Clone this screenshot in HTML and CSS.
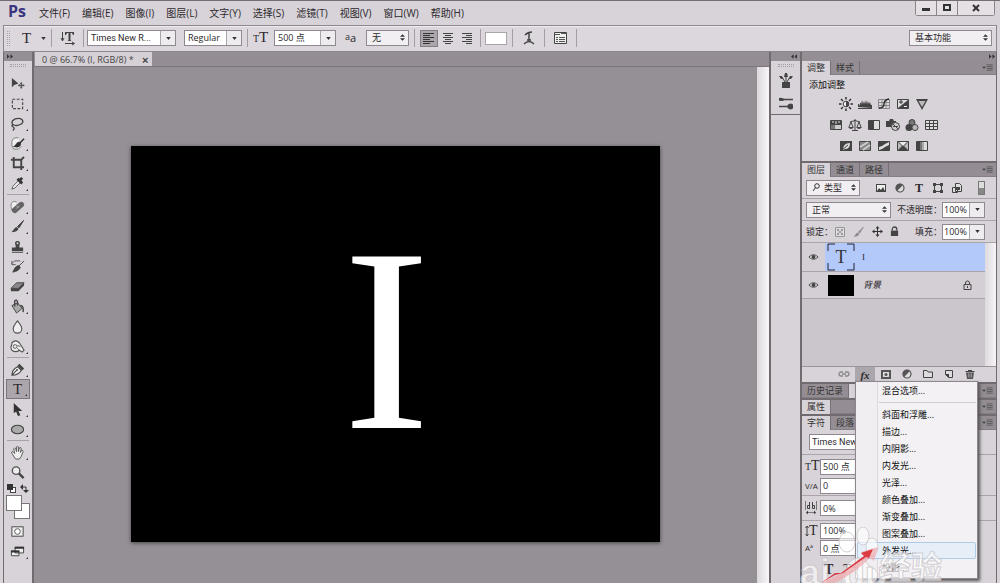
FILE: index.html
```html
<!DOCTYPE html>
<html lang="zh-CN">
<head>
<meta charset="utf-8">
<title>Photoshop</title>
<link rel="stylesheet" href="styles.css">
</head>
<body>
<svg class="defs" aria-hidden="true">
  <symbol id="caret" viewBox="0 0 6 4"><path d="M0 0h6L3 4z" fill="#333"/></symbol>
  <symbol id="updown" viewBox="0 0 6 8"><path d="M0 3l3-3 3 3zM0 5h6L3 8z" fill="#333"/></symbol>
  <symbol id="ff" viewBox="0 0 7 5"><path d="M0 0l3 2.500L0 5zM4 0l3 2.500L4 5z" fill="#333"/></symbol>
  <symbol id="rw" viewBox="0 0 7 5"><path d="M3 0L0 2.500 3 5zM7 0L4 2.500 7 5z" fill="#333"/></symbol>
  <symbol id="flyout" viewBox="0 0 12 8"><path d="M0 3h4L2 5.500z" fill="#333"/><path d="M5 1h7M5 3h7M5 5h7M5 7h7" stroke="#555"/></symbol>
  <symbol id="eye" viewBox="0 0 12 8"><path d="M1 4Q6-1 11 4Q6 9 1 4z" fill="#eee" stroke="#444"/><circle cx="6" cy="4" r="2.200" fill="#444"/></symbol>
  <symbol id="lock" viewBox="0 0 10 12"><path d="M2.500 5V3.500a2.500 2.500 0 0 1 5 0V5" fill="none" stroke="#444" stroke-width="1.400"/><rect x="1" y="5" width="8" height="6" fill="#444"/></symbol>
  <symbol id="brush" viewBox="0 0 16 16"><path d="M14.500 1.500L8 8l1.500 1.500z" fill="#444" stroke="#444"/><path d="M7 8.500l2 2c-1 3-4 3.500-8 3.500 3-1 3-4.500 6-5.500z" fill="#444"/></symbol>
  <symbol id="half" viewBox="0 0 12 12"><circle cx="6" cy="6" r="4" fill="#ddd" stroke="#555" stroke-width="1.200"/><path d="M3 9A4.200 4.200 0 0 1 9 3z" fill="#555"/></symbol>
</svg>

<div class="window">
  <header class="titlebar">
    <span class="logo">Ps</span>
    <nav class="menubar">
      <button>文件(F)</button><button>编辑(E)</button><button>图像(I)</button><button>图层(L)</button><button>文字(Y)</button><button>选择(S)</button><button>滤镜(T)</button><button>视图(V)</button><button>窗口(W)</button><button>帮助(H)</button>
    </nav>
    <div class="winbtns">
      <button aria-label="最小化"><svg width="10" height="8"><path d="M1 5.500h8" stroke="#333" stroke-width="3"/></svg></button>
      <button aria-label="最大化"><svg width="10" height="8"><rect x="2" y="1" width="6" height="5" fill="none" stroke="#333" stroke-width="2"/></svg></button>
      <button class="close" aria-label="关闭"><svg width="10" height="8"><path d="M2 1l6 6M8 1L2 7" stroke="#333" stroke-width="2"/></svg></button>
    </div>
  </header>

  <div class="options">
    <span class="handle"></span>
    <span class="type-tool serif">T</span>
    <svg class="type-caret" width="5" height="3"><use href="#caret"/></svg>
    <i class="vsep"></i>
    <button class="ob orient" aria-label="切换文本取向"><svg width="16" height="16" viewBox="0 0 16 16"><path d="M2.500 2v8M1 8l1.500 3L4 8M5 13.500h9M12 12l2.500 1.500L12 15" fill="none" stroke="#444"/><path d="M5 2h9v3h-1L12 3h-1.500v7l1 1h-4l1-1V3H7L6 5H5z" fill="#444"/></svg></button>
    <i class="vsep"></i>
    <div class="combo family"><input aria-label="字体" value="Times New R..."><button aria-label="选择字体"><svg width="5" height="3"><use href="#caret"/></svg></button></div>
    <div class="combo style"><input aria-label="字体样式" value="Regular"><button aria-label="选择样式"><svg width="5" height="3"><use href="#caret"/></svg></button></div>
    <i class="vsep"></i>
    <span class="tt serif"><small>T</small>T</span>
    <div class="combo size"><input aria-label="字体大小" value="500 点"><button aria-label="选择大小"><svg width="5" height="3"><use href="#caret"/></svg></button></div>
    <span class="aa"><small>a</small>a</span>
    <div class="pick alias"><select aria-label="消除锯齿"><option>无</option></select><svg width="5" height="7"><use href="#updown"/></svg></div>
    <i class="vsep"></i>
    <button class="ob al on" aria-label="左对齐"><svg width="12" height="12"><path d="M0 1.500h11M0 3.500h7M0 5.500h11M0 7.500h7M0 9.500h11M0 11.500h7" stroke="#333"/></svg></button>
    <button class="ob al" aria-label="居中"><svg width="12" height="12"><path d="M1 1.500h10M3 3.500h6M1 5.500h10M3 7.500h6M1 9.500h10M3 11.500h6" stroke="#444"/></svg></button>
    <button class="ob al" aria-label="右对齐"><svg width="12" height="12"><path d="M1 1.500h10M5 3.500h6M1 5.500h10M5 7.500h6M1 9.500h10M5 11.500h6" stroke="#444"/></svg></button>
    <i class="vsep"></i>
    <button class="swatch" aria-label="文本颜色"></button>
    <i class="vsep"></i>
    <button class="ob warp" aria-label="变形文字"><svg width="12" height="14" viewBox="0 0 12 14"><path d="M2 4q3-3 7-3M6 2v7M4 9h4M1 13q5-5 10 0" fill="none" stroke="#444" stroke-width="1.500"/></svg></button>
    <i class="vsep"></i>
    <button class="ob warp" aria-label="字符面板"><svg width="14" height="13"><path d="M.5.500h12v11H.5z" fill="#eee" stroke="#444"/><path d="M1 2.500h5M7 1.500h5" stroke="#555"/><path d="M2 5.500h2M5 5.500h6M2 7.500h2M5 7.500h6M2 9.500h2M5 9.500h6" stroke="#555"/></svg></button>
    <i class="vsep"></i>
    <div class="pick workspace"><select aria-label="工作区"><option>基本功能</option></select><svg width="5" height="7"><use href="#updown"/></svg></div>
  </div>

  <main class="main">
    <aside class="tools">
      <div class="strip"><svg width="6" height="5"><use href="#ff"/></svg></div>
      <span class="dots"></span>
      <button class="nosub" aria-label="移动"><svg viewBox="0 0 16 16"><path d="M2 2v10l2.500-2.500L9 8z" fill="#444"/><path d="M12 6.500v7M8.500 10h7M11 8h2M11 12h2M10 9v2M14 9v2" stroke="#444"/></svg></button>
      <button aria-label="选框"><svg viewBox="0 0 16 16"><rect x="2.500" y="3.500" width="11" height="10" fill="none" stroke="#444" stroke-width="1.200" stroke-dasharray="3 1.700"/></svg></button>
      <button aria-label="套索"><svg viewBox="0 0 16 16"><path d="M3.500 10C0 6 4 2.500 9 2.500s6 4 3 6-7 2-8 1-3 1-1 2 2 2 0 4" fill="none" stroke="#444" stroke-width="1.400"/></svg></button>
      <button aria-label="快速选择"><svg viewBox="0 0 16 16"><path d="M9 2Q3 1 2 6t2 8h5l3-3" fill="#eee" stroke="#777"/><path d="M15 3l-5 5M10 7c-3 0-3 3-5 4 3 1 6 0 6-3z" fill="#333" stroke="#333" stroke-width="1.600"/></svg></button>
      <button aria-label="裁剪"><svg viewBox="0 0 16 16"><path d="M1 4h11v11M4 1v11h11M12 4l3-3" fill="none" stroke="#444" stroke-width="2"/></svg></button>
      <button aria-label="吸管"><svg viewBox="0 0 16 16"><path d="M2 14l1-3 6-6 2 2-6 6z" fill="#eee" stroke="#555"/><path d="M8 3l5 5M10 5l3-3" stroke="#333" stroke-width="3"/></svg></button>
      <hr>
      <button aria-label="修复画笔"><svg viewBox="0 0 16 16"><path d="M7 3Q1 1 1 8q0 5 4 6" fill="#eee" stroke="#888"/><path d="M5 12l7-6" stroke="#666" stroke-width="6" stroke-linecap="round"/><path d="M7 10l3-3M7 7.500l2.500 2.500" stroke="#ddd" stroke-dasharray="1"/></svg></button>
      <button aria-label="画笔"><svg viewBox="0 0 16 16"><use href="#brush"/></svg></button>
      <button aria-label="仿制图章"><svg viewBox="0 0 16 16"><path d="M6 7Q4 2 8 2t2 5v2h4v4H2V9h4zM2 14h12v1H2z" fill="#444"/><circle cx="8" cy="4.500" r="1" fill="#ddd"/></svg></button>
      <button aria-label="历史画笔"><svg viewBox="0 0 16 16"><path d="M15 2L9 8M9 7l2 2c-2 4-5 4-8 5 2-3 2-6 6-7z" fill="#444" stroke="#444"/><path d="M11 2H5L2 5M2 2v4h4" fill="none" stroke="#555"/></svg></button>
      <button aria-label="橡皮擦"><svg viewBox="0 0 16 16"><path d="M1 10l6-6h8l-6 6z" fill="#888" stroke="#444"/><path d="M1 10v3h8l6-6V4l-6 6z" fill="#444"/></svg></button>
      <button aria-label="油漆桶"><svg viewBox="0 0 16 16"><path d="M2 7l6-3 5 6-6 5z" fill="#aaa" stroke="#444"/><path d="M5 8V2q2-2 3 1v4M11 7q4 0 3 7" fill="none" stroke="#444" stroke-width="1.500"/></svg></button>
      <button aria-label="模糊"><svg viewBox="0 0 16 16"><path d="M8 2Q3 8 3.500 11a4.500 4 0 0 0 9 0Q13 8 8 2z" fill="#eee" stroke="#555" stroke-width="1.200"/></svg></button>
      <button aria-label="减淡"><svg viewBox="0 0 16 16"><path d="M2 4Q6 0 10 4l5 8-2 2-3-2Q6 15 2 12 0 9 2 6z" fill="#eee" stroke="#555" stroke-width="1.200"/><circle cx="5.500" cy="8" r="2" fill="none" stroke="#555"/><path d="M8 7l3 1M10 12l-2-2" stroke="#555"/></svg></button>
      <hr>
      <button aria-label="钢笔"><svg viewBox="0 0 16 16"><path d="M2 14q0-6 6-9l4 4q-3 5-10 5zl5-5" fill="#eee" stroke="#444" stroke-width="1.200"/><path d="M9 3l5 5" stroke="#444" stroke-width="3"/><circle cx="7.500" cy="8.500" r="1" fill="#444"/></svg></button>
      <button class="active serif" aria-label="横排文字">T</button>
      <button aria-label="路径选择"><svg viewBox="0 0 16 16"><path d="M4 1v11l2.500-2 2 5 2.500-1-2-4.500h4z" fill="#333"/></svg></button>
      <button aria-label="椭圆"><svg viewBox="0 0 16 16"><ellipse cx="8" cy="8" rx="6.500" ry="4.500" fill="#aaa" stroke="#444" stroke-width="1.200"/></svg></button>
      <hr>
      <button aria-label="抓手"><svg viewBox="0 0 16 16"><path d="M6 15L2 9q-1-2 1-2l2 2-1-5q1-2 2 0l1 3V2q1-1 2 0v5l1-4q2-1 2 1l-1 4 1-2q2-1 2 1l-2 5-2 3z" fill="#eee" stroke="#555"/></svg></button>
      <button class="nosub" aria-label="缩放"><svg viewBox="0 0 16 16"><circle cx="6.500" cy="6" r="4" fill="#eee" stroke="#555" stroke-width="1.500"/><path d="M9.500 9l5 5" stroke="#444" stroke-width="2.500"/></svg></button>
      <div class="mini">
        <svg width="9" height="9"><rect x="3.500" y="3.500" width="5" height="5" fill="#fff" stroke="#444"/><rect width="6" height="6" fill="#333"/></svg>
        <svg width="9" height="9"><path d="M2 3h4v4" fill="none" stroke="#333"/><path d="M3 0L0 3l3 3zM3 6h6L6 9z" fill="#333"/></svg>
      </div>
      <div class="colors"><button class="fg" aria-label="前景色"></button><button class="bg" aria-label="背景色"></button></div>
      <button class="nosub" aria-label="快速蒙版"><svg viewBox="0 0 16 16"><rect x="2" y="3" width="12" height="10" fill="#eee" stroke="#444"/><circle cx="8" cy="8" r="3" fill="#fff" stroke="#555"/></svg></button>
      <button aria-label="屏幕模式"><svg viewBox="0 0 16 16"><path d="M5.500 3.500h9v6h-9zM1.500 7.500h8v5h-8z" fill="#eee" stroke="#444"/><path d="M5 4h10M1 8h9" stroke="#333" stroke-width="2"/></svg></button>
    </aside>

    <section class="doc">
      <div class="doctabs"><div class="doctab">0 @ 66.7% (I, RGB/8) * <button aria-label="关闭文档">×</button></div></div>
      <div class="stage">
        <div class="board"><div class="canvas serif">I</div></div>
        <div class="scroll"></div>
      </div>
    </section>

    <div class="dock">
      <div class="strip"><svg width="6" height="5"><use href="#rw"/></svg></div>
      <div class="dockbox">
        <span class="dots"></span>
        <button aria-label="画笔预设"><svg width="14" height="16" viewBox="0 0 14 16"><path d="M3 9h8v6H3z" fill="#444"/><path d="M6 9L3 4M7 9V3M8 9l3-5" stroke="#444"/><path d="M0 3h3l1 3-2 0zM6 0h2l1 4H5zM11 3h3l-2 3h-2z" fill="#444"/></svg></button>
        <button aria-label="画笔"><svg width="16" height="16" viewBox="0 0 16 16"><path d="M5 4.500h10M1 11.500h10" stroke="#444" stroke-width="1.500"/><path d="M1 3q3-1 6 1.500Q4 7 1 5.500zM9 11.500q1-3 4-3l2 1v4l-2 1q-3 0-4-3z" fill="#444"/></svg></button>
      </div>
    </div>

    <aside class="panels">
      <div class="strip right"><svg width="6" height="5"><use href="#ff"/></svg></div>
      <section class="panel adjust">
        <div class="tabs"><button class="sel">调整</button><button>样式</button><svg width="11" height="7"><use href="#flyout"/></svg></div>
        <h2>添加调整</h2>
        <div class="grid">
          <div>
            <svg viewBox="0 0 14 14"><circle cx="7" cy="7" r="2.800" fill="#eee" stroke="#444"/><path d="M7 4a3 3 0 0 1 0 6z" fill="#444"/><path d="M7 0v2.500M7 11.500V14M0 7h2.500M11.500 7H14M2 2l2 2M10 10l2 2M12 2l-2 2M4 10l-2 2" stroke="#333" stroke-width="1.500"/></svg>
            <svg viewBox="0 0 14 14"><path d="M0 10V7h1l1 2V6h1v2l1-5 1 4 1-3 1 3 1-4 1 4 1-3 1 3 1-2 1 3h1v3zM0 11h14v1H0z" fill="#444"/></svg>
            <svg viewBox="0 0 14 14"><path d="M1.500 2.500h11v9h-11zM5 2v10M9 2v10M1 5.500h12M1 8.500h12" fill="#ddd" stroke="#888"/><path d="M2 11q5 0 5-4t5-5" fill="none" stroke="#222" stroke-width="1.300"/></svg>
            <svg viewBox="0 0 14 14"><path d="M1.500 2.500h11v9h-11z" fill="#ddd" stroke="#444"/><path d="M12 3v8H2z" fill="#444"/><path d="M3 5h4M5 3v4" stroke="#333"/><path d="M8 9.500h3" stroke="#eee"/></svg>
            <svg viewBox="0 0 14 14"><path d="M1 2h12L7 13z" fill="#444"/><path d="M3.500 4h7L7 10z" fill="#bbb"/></svg>
          </div>
          <div>
            <svg viewBox="0 0 14 14"><path d="M1.500 2.500h11v9h-11z" fill="#ccc" stroke="#444"/><path d="M2 3h10v4H2z" fill="#444"/><path d="M4 3v2M7 3v3M10 3v2" stroke="#ddd"/><path d="M2 7h4v4H2z" fill="#777"/></svg>
            <svg viewBox="0 0 14 14"><path d="M7 1v11M4 12.500h6M2 4q5-3 10 0M3 4L1 9M3 4l2 5M11 4L9 9M11 4l2 5" fill="none" stroke="#444"/><path d="M0 9h6q-3 4-6 0zM8 9h6q-3 4-6 0z" fill="#444"/></svg>
            <svg viewBox="0 0 14 14"><path d="M1.500 2.500h11v9h-11z" fill="#ddd" stroke="#444"/><path d="M2 3h5v8H2z" fill="#444"/></svg>
            <svg viewBox="0 0 14 14"><path d="M0 3h3l1-2h3l1 2h2v6H0z" fill="#444"/><circle cx="9.500" cy="8.500" r="4" fill="#ccc" stroke="#444"/><path d="M7 6l5 5M7 8.500h5" stroke="#444"/></svg>
            <svg viewBox="0 0 14 14"><circle cx="7" cy="4.500" r="3" fill="#777" stroke="#444"/><circle cx="4" cy="9.500" r="3.500" fill="#444"/><circle cx="10" cy="9.500" r="3" fill="#bbb" stroke="#444"/></svg>
            <svg viewBox="0 0 14 14"><path d="M1.500 2.500h12v9h-12zM5.500 2v10M9.500 2v10M1 5.500h13M1 8.500h13" fill="#ddd" stroke="#444"/></svg>
          </div>
          <div>
            <svg viewBox="0 0 14 14"><path d="M1 2h12v10H1z" fill="#444"/><path d="M4 11q0-7 7-7 0 6-5 6z" fill="#ddd"/><path d="M3 11l6-5" stroke="#444"/></svg>
            <svg viewBox="0 0 14 14"><path d="M1.500 2.500h11v9h-11z" fill="#888" stroke="#444"/><path d="M2 8l8-5M5 11l7-5" stroke="#ccc" stroke-width="2"/></svg>
            <svg viewBox="0 0 14 14"><path d="M1.500 2.500h11v9h-11z" fill="#444" stroke="#444"/><path d="M2 8l3-1 3-2 4-2v3L8 8l-3 2-3 1z" fill="#ddd"/></svg>
            <svg viewBox="0 0 14 14"><path d="M1.500 2.500h11v9h-11z" fill="#444" stroke="#444"/><path d="M2 3l4 4-4 4zM12 3L8 7l4 4z" fill="#bbb"/><path d="M3 3h8L7 7z" fill="#eee"/></svg>
            <svg viewBox="0 0 14 14"><path d="M1.500 2.500h11v9h-11z" fill="#ddd" stroke="#444"/><path d="M2 3h3v8H2z" fill="#444"/><path d="M5 3h2v8H5z" fill="#777"/><path d="M7 3h2v8H7z" fill="#aaa"/></svg>
          </div>
        </div>
      </section>

      <section class="panel layers">
        <div class="tabs"><button class="sel">图层</button><button>通道</button><button>路径</button><svg width="11" height="7"><use href="#flyout"/></svg></div>
        <div class="row">
          <div class="pick kind"><svg class="mag" width="8" height="9"><circle cx="5" cy="3" r="2.300" fill="none" stroke="#333"/><path d="M3.500 4.500L1 8" stroke="#333"/></svg><select aria-label="类型"><option>类型</option></select><svg width="5" height="7"><use href="#updown"/></svg></div>
          <div class="filters">
            <svg width="12" height="12"><rect x="1.500" y="2.500" width="9" height="7" fill="#eee" stroke="#444"/><path d="M2 9l2-3 2 2 2-3 2 4z" fill="#444"/></svg>
            <svg width="12" height="12"><use href="#half"/></svg>
            <b class="serif">T</b>
            <svg width="12" height="12"><path d="M2.500 3v6M9.500 3v6M3 2.500h6M3 9.500h6" stroke="#444"/><path d="M1 1h3v3H1zM8 1h3v3H8zM1 8h3v3H1zM8 8h3v3H8z" fill="#444"/></svg>
            <svg width="12" height="12"><path d="M4.500 1.500h4l2 2v6h-6zM1.500 5.500h5v5h-5z" fill="#ddd" stroke="#444"/><path d="M5 5h4v3H5z" fill="#444"/></svg>
          </div>
          <svg class="toggle" width="7" height="14"><rect x=".5" y=".5" width="6" height="13" fill="#ddd" stroke="#777"/><path d="M1 7h5v6H1z" fill="#888"/></svg>
        </div>
        <div class="row">
          <div class="pick blend"><select aria-label="混合模式"><option>正常</option></select><svg width="5" height="7"><use href="#updown"/></svg></div>
          <label class="right" for="op">不透明度：</label><div class="combo pct"><input id="op" value="100%"><button aria-label="不透明度滑块"><svg width="5" height="3"><use href="#caret"/></svg></button></div>
        </div>
        <div class="row">
          <span class="lk">锁定：</span>
          <div class="locks">
            <svg width="10" height="10"><path d="M.5.5h9v9h-9z" fill="#ddd" stroke="#999"/><path d="M2 2h2v2H2zM6 2h2v2H6zM4 4h2v2H4zM2 6h2v2H2zM6 6h2v2H6z" fill="#999"/></svg>
            <svg width="13" height="12" opacity=".5"><use href="#brush"/></svg>
            <svg width="11" height="11"><path d="M5.500 1v9M1 5.500h9" stroke="#333"/><path d="M5.500 0l2 2.500h-4zM5.500 11l2-2.500h-4zM0 5.500l2.500-2v4zM11 5.500l-2.500-2v4z" fill="#333"/></svg>
            <svg width="9" height="11"><use href="#lock"/></svg>
          </div>
          <label class="right" for="fl">填充：</label><div class="combo pct"><input id="fl" value="100%"><button aria-label="填充滑块"><svg width="5" height="3"><use href="#caret"/></svg></button></div>
        </div>
        <div class="list">
          <ul>
            <li class="cur"><span class="eye"><svg width="11" height="8"><use href="#eye"/></svg></span><span class="thumb text serif"><svg viewBox="0 0 28 28"><path d="M1 8V1h7M20 1h7v7M27 20v7h-7M8 27H1v-7" fill="none" stroke="#223"/></svg>T</span><span class="lname serif">I</span></li>
            <li><span class="eye"><svg width="11" height="8"><use href="#eye"/></svg></span><span class="thumb"></span><em class="lname">背景</em><svg class="lk2" width="9" height="10" viewBox="0 0 9 10"><path d="M2.500 4V3a2 2 0 0 1 4 0v1M1 4.500h7v5H1zM4.500 6v2" fill="none" stroke="#444"/></svg></li>
          </ul>
          <div class="lscroll"></div>
        </div>
        <div class="foot">
          <button aria-label="链接"><svg width="12" height="12"><path d="M5 4H3a2 2 0 0 0 0 4h2M7 4h2a2 2 0 0 1 0 4H7M4 6h4" fill="none" stroke="#888" stroke-width="1.300"/></svg></button>
          <div class="fxwrap">
            <button class="fx serif" aria-label="图层样式">fx</button>
            <div class="menu">
              <button>混合选项...</button>
              <hr>
              <button>斜面和浮雕...</button><button>描边...</button><button>内阴影...</button><button>内发光...</button><button>光泽...</button><button>颜色叠加...</button><button>渐变叠加...</button><button>图案叠加...</button><button class="hot">外发光...</button><button>投影...</button>
            </div>
          </div>
          <button aria-label="蒙版"><svg width="12" height="12"><rect x="2" y="3" width="8" height="7" fill="#ddd" stroke="#555" stroke-width="2"/><circle cx="6" cy="6.500" r="1.500" fill="#555"/></svg></button>
          <button aria-label="调整图层"><svg width="12" height="12"><use href="#half"/></svg></button>
          <button aria-label="新建组"><svg width="12" height="12"><path d="M1.500 9.500v-7H5l1 1.500h4.500v5.500z" fill="#ddd" stroke="#444"/></svg></button>
          <button aria-label="新建图层"><svg width="12" height="12"><path d="M2.500 2.500h7v7h-4l-3-3z" fill="#ddd" stroke="#444"/><path d="M2 6h4v4z" fill="#444"/></svg></button>
          <button aria-label="删除"><svg width="12" height="12"><path d="M1.500 3.500h9M4 2.500h4" stroke="#444"/><path d="M2 4.500h8L9 11H3z" fill="#555"/><path d="M4.500 5.500v4M6 5.500v4M7.500 5.500v4" stroke="#bbb" stroke-width=".6"/></svg></button>
        </div>
      </section>

      <section class="panel"><div class="tabs"><button>历史记录</button><button class="sel blank" aria-label="动作"></button><svg width="11" height="7"><use href="#flyout"/></svg></div></section>
      <section class="panel"><div class="tabs"><button class="sel">属性</button><svg width="11" height="7"><use href="#flyout"/></svg></div></section>
      <section class="panel chars">
        <div class="tabs"><button class="sel">字符</button><button>段落</button><svg width="11" height="7"><use href="#flyout"/></svg></div>
        <div class="crow first"><input aria-label="字体系列" value="Times New"></div>
        <div class="crow"><label class="serif" for="c1"><small>T</small>T</label><input id="c1" value="500 点"></div>
        <div class="crow"><label class="va" for="c2">V/A</label><input id="c2" value="0"></div>
        <div class="crow tall"><label for="c3"><svg width="12" height="14" viewBox="0 0 12 14"><path d="M.5 0v9M11.500 0v9M1 11.500h10" stroke="#777"/><path d="M4.500 4.500h-2v3h2zM4.500 1v7M7.500 1v6.500h2v-3h-2" fill="none" stroke="#444"/><path d="M1 11.500l2-2v4zM11 11.500l-2-2v4z" fill="#444"/></svg></label><input id="c3" value="0%"></div>
        <div class="crow"><label class="serif vt" for="c4"><svg width="4" height="12" viewBox="0 0 4 12"><path d="M2 1v10M.5 3L2 1l1.500 2M.5 9L2 11l1.500-2" fill="none" stroke="#444"/></svg>T</label><input id="c4" value="100%"></div>
        <div class="crow low"><label class="va" for="c5">Aª</label><input id="c5" value="0 点"></div>
        <div class="crow faux serif"><b>T</b><i>T</i></div>
      </section>
    </aside>
  </main>

  <svg class="mark" width="150" height="56" viewBox="0 0 150 56" aria-hidden="true">
    <g fill="#fff" fill-opacity=".6" stroke="#c9c4c9" stroke-opacity=".8">
      <ellipse cx="48" cy="15" rx="8" ry="10"/><ellipse cx="64" cy="9" rx="6" ry="9"/><ellipse cx="73" cy="20" rx="6" ry="9"/><path d="M44 47Q45 38 55 32q8-3 12 2 2 6 9 8 5 5 1 11l-4 4H45q-3-5-1-10z"/>
      <text class="mlat" x="1" y="58">ai</text>
      <text class="mlat" x="44" y="60">du</text>
      <text class="mcn" x="81" y="51">经验</text>
    </g>
    <path d="M16 58Q46 48 66 28l-4-3 17-5-4 14-4-3Q49 52 26 60z" fill="#f0a8ac" fill-opacity=".7"/>
    <path d="M22 56L36 46l6 0 23-17-3-3 12-4-4 9-3-1-23 16-8 2z" fill="#dc3b43"/>
  </svg>
</div>
</body>
</html>
```
FILE: styles.css
```css
* { box-sizing: border-box; }
body { margin: 0; background: #d8d3d8; color: #2c292d; font: 10px/14px "Open Sans", "Noto Sans CJK SC", sans-serif; }
button, input, select { font: inherit; color: inherit; margin: 0; padding: 0; border: 0; background: none; border-radius: 0; }
button { display: flex; align-items: center; justify-content: center; }
input { min-width: 0; }
svg { flex: none; display: block; }
.defs { display: none; }
.serif { font-family: "Liberation Serif", serif; }

.window { position: relative; height: 100vh; overflow: hidden; display: flex; flex-direction: column; border-top: 1px solid #746e73; padding: 0 3px; }
.titlebar { display: flex; height: 24px; flex: none; }
.logo { width: 36px; padding-left: 5px; font: bold 16px/21px "Open Sans", sans-serif; color: #3a3580; }
.menubar { display: flex; gap: 12px; align-items: center; height: 24px; }
.menubar button { white-space: nowrap; }
.winbtns { margin-left: auto; margin-right: 2px; display: flex; height: 15px; border: 1px solid #8b858b; border-top: 0; border-radius: 0 0 3px 3px; }
.winbtns button { width: 21px; background: #e4e0e4; border-right: 1px solid #8b858b; }
.winbtns .close { width: 36px; border-right: 0; }

.options { display: flex; align-items: center; flex: none; height: 27px; border: 1px solid #8d878d; background: #dcd7dc; box-shadow: inset 0 1px #eeeaee; padding-bottom: 1px; }
.handle { width: 3px; height: 15px; margin: 0 12px 0 3px; border: dotted #aaa5aa; border-width: 0 1px; }
.type-tool { font-size: 15px; width: 15px; }
.type-caret { margin: 0 5px 0 4px; }
.vsep { flex: none; width: 1px; height: 18px; background: #a49ea4; }
.ob { height: 17px; flex: none; }
.orient { width: 31px; }
.combo { display: flex; height: 16px; border: 1px solid #8f898f; background: #fff; flex: none; }
.combo input { flex: 1; padding: 0 3px; background: #fff; font-size: 9px; }
.combo button { width: 15px; flex: none; border-left: 1px solid #aaa5aa; background: #efecef; }
.family { width: 89px; margin: 0 8px 0 3px; }
.combo.family input, .crow.first input { font-family: Roboto, sans-serif; }
.style { width: 58px; margin-right: 5px; }
.size { width: 62px; }
.tt { font-size: 15px; width: 26px; padding-left: 5px; }
.tt small, .crow small { font-size: 10px; }
.aa { width: 30px; padding-left: 9px; font-size: 11px; display: flex; align-items: center; }
.aa small { font-size: 9px; line-height: 9px; padding-bottom: 3px; }
.pick { position: relative; display: flex; align-items: center; height: 16px; border: 1px solid #8f898f; background: #f1eff1; flex: none; font-size: 9px; }
.pick select { appearance: none; width: 100%; height: 14px; padding-left: 5px; }
.pick svg:last-child { position: absolute; right: 3px; top: 3px; }
.alias { width: 43px; margin-right: 5px; }
.al { width: 19px; }
.al.on { width: 18px; margin-left: 5px; background: #aba6ab; border: 1px solid #847e84; }
.al + .vsep { margin-left: 4px; }
.swatch { width: 22px; height: 13px; background: #fff; border: 1px solid #aaa5aa; margin: 0 5px 0 4px; flex: none; }
.warp { width: 31px; }
.workspace { width: 83px; margin: 0 4px 0 auto; }

.main { flex: 1; display: flex; min-height: 0; background: #716b70; border: solid #716b70; border-width: 0 1px; }
.strip { height: 9px; flex: none; background: #958f95; display: flex; align-items: center; padding-left: 3px; }
.strip.right { justify-content: flex-end; padding-right: 1px; }
.dots { display: block; width: 16px; height: 3px; margin: 3px auto; border: dotted #a49ea4; border-width: 1px 0; }
.tools { width: 28px; flex: none; background: #d8d3d8; display: flex; flex-direction: column; margin-right: 2px; }
.tools > .dots { margin-bottom: 6px; flex: none; }
.tools > button { position: relative; height: 20px; width: 24px; margin: 0 2px; flex: none; padding-right: 1px; }
.tools > button svg { width: 15px; height: 15px; }
.tools > button:not(.nosub)::after { content: ""; position: absolute; right: 2px; bottom: 2px; border: 1px solid #333; border-top-color: transparent; border-left-color: transparent; }
.tools > .active { background: #aca6ac; border: 1px solid #7b757b; font-size: 15px; }
.tools hr { width: 22px; height: 1px; margin: 1px auto; border: 0; background: #a9a3a9; flex: none; }
.mini { display: flex; justify-content: space-between; padding: 2px 3px; }
.colors { display: grid; grid-template: 8px 8px 8px / 8px 8px 8px; margin: 0 2px 2px; }
.colors button { background: #fff; border: 1px solid #777; }
.colors .fg { grid-area: 1 / 1 / 3 / 3; z-index: 1; }
.colors .bg { grid-area: 2 / 2 / 4 / 4; }

.doc { flex: 1; min-width: 0; display: flex; flex-direction: column; }
.doctabs { height: 15px; background: #948e94; border-bottom: 1px solid #7b757b; display: flex; flex: none; }
.doctab { display: flex; align-items: center; gap: 6px; margin-left: 1px; padding: 2px 4px 0 7px; background: #d5d0d5; font-size: 9px; color: #444; white-space: pre; }
.doctab button { font: bold 11px/12px "Liberation Sans", sans-serif; }
.stage { flex: 1; display: flex; min-height: 0; background: #959096; }
.board { flex: 1; padding-top: 79px; }
.canvas { width: 529px; max-width: 100%; aspect-ratio: 529 / 396; margin: 0 auto; padding-right: 18px; background: #000; color: #fff; font-size: 262px; line-height: 388px; text-align: center; box-shadow: 0 1px 4px #444; }
.scroll { width: 12px; background: linear-gradient(90deg, #dcd8dc, #f8f6f8); }

.dock { width: 29px; margin: 0 0 0 2px; display: flex; flex-direction: column; background: #d8d3d8; flex: none; }
.dock .strip { justify-content: flex-end; padding-right: 3px; }
.dockbox { border-bottom: 1px solid #716b70; }
.dockbox button { width: 100%; height: 22px; }

.panels { width: 194px; margin-left: 2px; flex: none; display: flex; flex-direction: column; }
.panel { background: #d8d3d8; margin-bottom: 2px; flex: none; }
.tabs { display: flex; height: 14px; background: #948e94; font-size: 9px; line-height: 12px; border-bottom: 1px solid #857f85; color: #333; }
.tabs button { padding: 0 5px; border-right: 1px solid #777177; }
.tabs .sel { background: #d8d3d8; height: 14px; }
.tabs svg { margin: 3px 3px 0 auto; }
.blank { width: 60px; }
.adjust { height: 100px; }
.adjust h2 { margin: 3px 7px 1px; font: 9px/14px "Noto Sans CJK SC", sans-serif; color: #111; }
.grid { width: 109px; margin-left: 27px; display: grid; gap: 7px; padding-top: 4px; }
.grid div { display: flex; gap: 5px; justify-content: center; }
.grid svg { width: 14px; height: 14px; }
.row { display: flex; align-items: center; height: 22px; border-bottom: 1px solid #aaa4aa; padding: 0 11px 0 4px; font-size: 9px; white-space: nowrap; }
.row .right { margin-left: auto; }
.kind { width: 54px; }
.kind .mag { margin-left: 5px; flex: none; }
.kind select { padding-left: 4px; }
.filters { display: flex; gap: 7px; margin-left: 15px; align-items: center; }
.filters b { width: 12px; text-align: center; font-size: 12px; }
.toggle { margin-left: auto; }
.blend { width: 85px; }
.pct { width: 43px; }
.pct input { padding: 0 1px; }
.locks { display: flex; gap: 7px; align-items: center; margin-left: 2px; }
.list { display: flex; height: 123px; background: #cbc6cb; }
.list ul { flex: 1; margin: 0; padding: 0; list-style: none; }
.list li { display: flex; align-items: center; height: 27px; background: #d4cfd4; border-bottom: 1px solid #aaa4aa; }
.list .cur { height: 29px; background: #b3c9fa; }
.eye { width: 23px; height: 100%; display: flex; align-items: center; justify-content: center; background: #d4cfd4; }
.thumb { width: 26px; height: 21px; background: #000; margin: 0 9px 0 3px; }
.thumb.text { position: relative; width: 28px; height: 28px; margin: 0 7px 0 2px; background: none; color: #333; font-size: 18px; line-height: 28px; text-align: center; }
.thumb svg { position: absolute; inset: 0; }
.lname { font-size: 9px; }
.lk2 { margin-left: auto; margin-right: 13px; }
.lscroll { width: 11px; background: linear-gradient(90deg, #dedade, #f6f4f6); }
.foot { display: flex; justify-content: flex-end; height: 16px; padding-right: 16px; border-top: 1px solid #9a949a; }
.foot > button, .fxwrap { width: 21px; height: 13px; }
.fxwrap { position: relative; }
.fx { width: 20px; height: 15px; margin-left: 1px; background: #aba6ab; font: italic bold 11px/12px "Liberation Serif", serif; }
.menu { position: absolute; z-index: 3; left: 1px; top: 14px; width: 123px; padding: 0 1px 2px; background: linear-gradient(90deg, #f0eef1 21px, #dcd9dd 21px, #dcd9dd 22px, #f3f1f4 22px); border: 1px solid #8d878d; box-shadow: 2px 2px 3px #555; }
.menu button { width: 100%; height: 17px; justify-content: flex-start; padding-left: 24px; font-size: 9px; color: #111; border: 1px solid transparent; white-space: nowrap; }
.menu hr { margin: 3px 0 3px 22px; height: 1px; border: 0; background: #d0cdd1; }
.menu .hot { background: #e6eef8; border-color: #aecbe8; border-radius: 2px; }
.chars { flex: 1; margin: 0; }
.crow { display: flex; align-items: center; height: 19px; padding: 0 20px 0 3px; }
.crow input { width: 70px; height: 16px; background: #fff; border: 1px solid #8f898f; padding-left: 2px; font-size: 9px; }
.crow label { width: 15px; font-size: 14px; white-space: nowrap; }
.crow .va { font-size: 8px; }
.crow .vt { display: flex; align-items: center; }
.crow.first { height: 25px; padding-left: 7px; border-bottom: 1px solid #aaa4aa; margin-bottom: 2px; }
.crow.tall { height: 26px; border: solid #aaa4aa; border-width: 1px 0; }
.crow.low { height: 16px; }
.faux { gap: 9px; padding-left: 22px; font-size: 14px; height: 28px; }
.mark { position: absolute; z-index: 5; right: 51px; bottom: 0; overflow: hidden; }
.mlat { font: bold 36px "Liberation Sans", sans-serif; }
.mcn { font: bold 31px "Noto Sans CJK SC", sans-serif; }
```
